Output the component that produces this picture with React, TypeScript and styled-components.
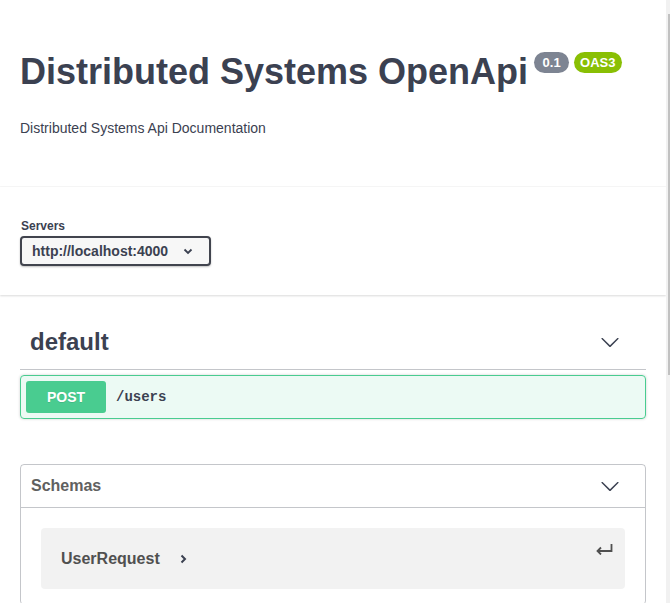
import styled, { createGlobalStyle } from "styled-components";

const GlobalStyle = createGlobalStyle`
  body {
    margin: 0;
    background: #fff;
    color: #3b4151;
    font-family: "Liberation Sans", Arial, sans-serif;
  }
`;

const Page = styled.div`
  margin-right: 4px;
`;

const ScrollTrack = styled.div`
  position: fixed;
  top: 0;
  right: 0;
  bottom: 0;
  width: 4px;
  background: #f1f1f1;
`;

const ScrollThumb = styled.div`
  position: absolute;
  top: 14px;
  right: 0;
  width: 2px;
  height: 361px;
  background: #c1c1c1;
`;

const Wrapper = styled.div`
  padding: 0 20px;
`;

const InfoSection = styled(Wrapper)`
  padding-top: 51px;
  padding-bottom: 51px;
`;

const TitleRow = styled.div`
  display: flex;
  align-items: flex-start;
`;

const Title = styled.h2`
  margin: 0;
  font-size: 36px;
  line-height: 42px;
  font-weight: 700;
  color: #3b4151;
`;

const Stamps = styled.div`
  display: flex;
  gap: 5px;
  margin: 1px 0 0 6px;
`;

const Stamp = styled.span<{ $bg: string }>`
  min-width: 35px;
  box-sizing: border-box;
  height: 21px;
  padding: 0 6px;
  border-radius: 57px;
  background: ${(p) => p.$bg};
  color: #fff;
  font-size: 13px;
  font-weight: 700;
  line-height: 21px;
  text-align: center;
`;

const Description = styled.p`
  margin: 27px 0 0;
  font-size: 14px;
  line-height: 16px;
`;

const SchemeContainer = styled.div`
  padding: 32px 0 29px;
  margin-bottom: 20px;
  background: #fff;
  box-shadow: 0 1px 2px 0 rgba(0, 0, 0, 0.15), 0 -1px 0 rgba(0, 0, 0, 0.03);
`;

const ServersLabel = styled.div`
  font-size: 12px;
  font-weight: 700;
  line-height: 14px;
  margin: 0 0 3px 1px;
`;

const SelectBox = styled.div`
  width: 191px;
  height: 30px;
  box-sizing: border-box;
  display: flex;
  align-items: center;
  justify-content: space-between;
  padding: 0 16px 0 10px;
  border: 2px solid #41444e;
  border-radius: 4px;
  background: #f7f7f7;
  box-shadow: 0 1px 2px 0 rgba(0, 0, 0, 0.25);
  font-size: 14px;
  font-weight: 700;
  color: #3b4151;
`;

const TagHeader = styled.h3`
  display: flex;
  align-items: center;
  justify-content: space-between;
  height: 34px;
  margin: 0 0 5px;
  padding: 10px 26px 10px 10px;
  border-bottom: 1px solid rgba(59, 65, 81, 0.3);
  font-size: 24px;
  font-weight: 700;
  color: #3b4151;
`;

const Opblock = styled.div`
  display: flex;
  align-items: center;
  padding: 5px;
  border: 1px solid #49cc90;
  border-radius: 4px;
  background: rgba(73, 204, 144, 0.1);
  box-shadow: 0 0 3px rgba(0, 0, 0, 0.19);
`;

const MethodBadge = styled.span`
  width: 80px;
  height: 32px;
  display: flex;
  align-items: center;
  justify-content: center;
  border-radius: 3px;
  background: #49cc90;
  color: #fff;
  font-size: 14px;
  font-weight: 700;
  text-shadow: 0 1px 0 rgba(0, 0, 0, 0.1);
`;

const PathText = styled.span`
  padding: 0 10px;
  font-family: "Liberation Mono", "DejaVu Sans Mono", monospace;
  font-size: 14px;
  font-weight: 700;
  color: #3b4151;
`;

const Models = styled.section`
  margin-top: 45px;
  border: 1px solid rgba(59, 65, 81, 0.3);
  border-radius: 4px;
`;

const ModelsHeader = styled.h4`
  display: flex;
  align-items: center;
  justify-content: space-between;
  height: 22px;
  margin: 0;
  padding: 10px 25px 10px 10px;
  border-bottom: 1px solid rgba(59, 65, 81, 0.3);
  font-size: 16px;
  font-weight: 700;
  color: #606060;
`;

const ModelContainer = styled.div`
  position: relative;
  display: flex;
  align-items: center;
  gap: 20px;
  margin: 20px 20px 15px;
  padding: 20px;
  height: 21px;
  border-radius: 4px;
  background: rgba(0, 0, 0, 0.05);
`;

const ModelTitle = styled.span`
  font-size: 16px;
  font-weight: 700;
  color: #505050;
`;

const JumpIcon = styled.svg`
  position: absolute;
  top: 15px;
  right: 12px;
`;

const Chevron = () => (
  <svg width="20" height="20" viewBox="0 0 20 20" fill="#3b4151">
    <path d="M17.418 6.109c.272-.268.709-.268.979 0s.271.701 0 .969l-7.908 7.83c-.27.268-.707.268-.979 0l-7.908-7.83c-.27-.268-.27-.701 0-.969.271-.268.709-.268.979 0L10 13.25l7.418-7.141z" />
  </svg>
);

export default function App() {
  return (
    <Page>
      <GlobalStyle />
      <InfoSection>
        <TitleRow>
          <Title>Distributed Systems OpenApi</Title>
          <Stamps>
            <Stamp $bg="#7d8492">0.1</Stamp>
            <Stamp $bg="#89bf04">OAS3</Stamp>
          </Stamps>
        </TitleRow>
        <Description>Distributed Systems Api Documentation</Description>
      </InfoSection>

      <SchemeContainer>
        <Wrapper>
          <ServersLabel>Servers</ServersLabel>
          <SelectBox>
            <span>http://localhost:4000</span>
            <svg width="10" height="7" viewBox="0 0 10 7">
              <path d="M1.5 1.5 L5 5 L8.5 1.5" stroke="#3b4151" strokeWidth="1.8" fill="none" />
            </svg>
          </SelectBox>
        </Wrapper>
      </SchemeContainer>

      <Wrapper>
        <TagHeader>
          <span>default</span>
          <Chevron />
        </TagHeader>
        <Opblock>
          <MethodBadge>POST</MethodBadge>
          <PathText>/users</PathText>
        </Opblock>

        <Models>
          <ModelsHeader>
            <span>Schemas</span>
            <Chevron />
          </ModelsHeader>
          <ModelContainer>
            <ModelTitle>UserRequest</ModelTitle>
            <svg width="7" height="10" viewBox="0 0 7 10">
              <path d="M1.5 1.5 L5 5 L1.5 8.5" stroke="#3b4151" strokeWidth="2" fill="none" />
            </svg>
            <JumpIcon width="17" height="12" viewBox="0 0 17 12">
              <path d="M15.5 1 V8 H2" stroke="#505050" strokeWidth="1.8" fill="none" />
              <path d="M5 4.5 L1.5 8 L5 11.5" stroke="#505050" strokeWidth="1.8" fill="none" />
            </JumpIcon>
          </ModelContainer>
        </Models>
      </Wrapper>

      <ScrollTrack>
        <ScrollThumb />
      </ScrollTrack>
    </Page>
  );
}
